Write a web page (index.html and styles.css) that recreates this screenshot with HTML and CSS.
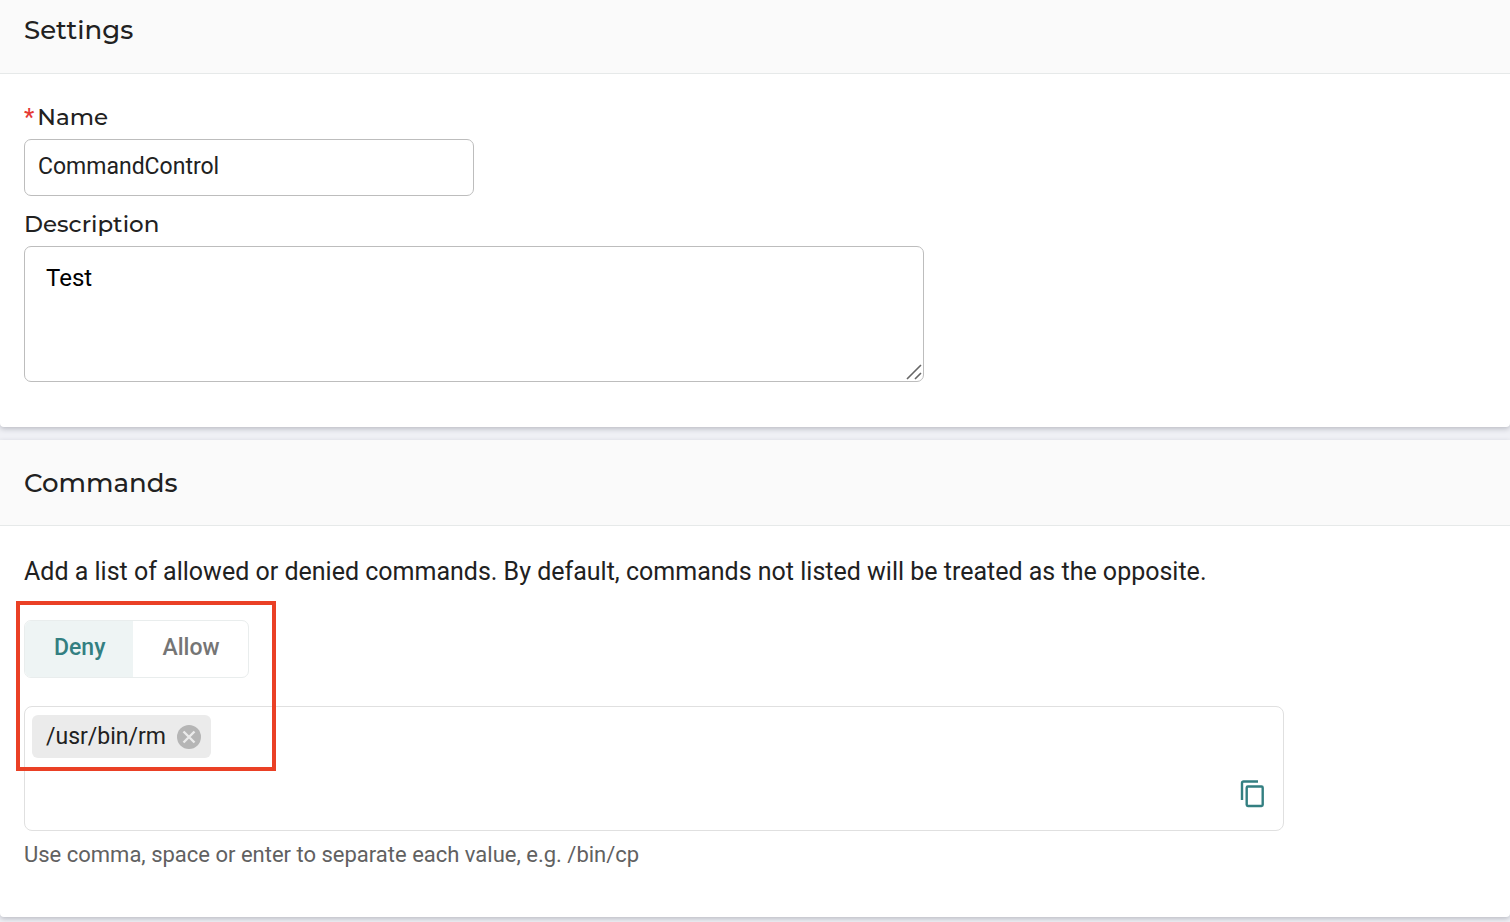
FILE: index.html
```html
<!DOCTYPE html>
<html lang="en">
<head>
    <meta charset="UTF-8">
    <meta name="viewport" content="width=device-width, initial-scale=1.0">
    <title>Command Control Settings</title>
    <link rel="stylesheet" href="styles.css">
</head>
<body>
    <main class="page">
        <section class="card">
            <header class="card-header card-header-first">
                <h2>Settings</h2>
            </header>
            <div class="card-body settings-body">
                <div class="field field-name">
                    <label for="name"><span class="required">*</span>Name</label>
                    <input type="text" id="name" value="CommandControl" required>
                </div>
                <div class="field field-description">
                    <label for="description">Description</label>
                    <div class="textarea-wrap">
                        <textarea id="description">Test</textarea>
                        <svg class="resize-grip" viewBox="0 0 16 16" aria-hidden="true">
                            <path d="M1 15L15 1M9 15l6-6" fill="none" stroke="#666" stroke-width="1.6"/>
                        </svg>
                    </div>
                </div>
            </div>
        </section>

        <section class="card">
            <header class="card-header">
                <h2>Commands</h2>
            </header>
            <div class="card-body commands-body">
                <p class="intro">Add a list of allowed or denied commands. By default, commands not listed will be treated as the opposite.</p>
                <div class="command-editor">
                    <div class="toggle" role="group" aria-label="Command mode">
                        <button type="button" class="toggle-btn active" aria-pressed="true">Deny</button>
                        <button type="button" class="toggle-btn" aria-pressed="false">Allow</button>
                    </div>
                    <div class="tag-box">
                        <span class="tag">
                            /usr/bin/rm
                            <button type="button" class="tag-remove" aria-label="Remove">
                                <svg viewBox="0 0 24 24">
                                    <circle cx="12" cy="12" r="12" fill="#b5b5b5"/>
                                    <path d="M6.500 6.500l11 11M17.500 6.500l-11 11" stroke="#ebebeb" stroke-width="2.4"/>
                                </svg>
                            </button>
                        </span>
                        <button type="button" class="copy-btn" aria-label="Copy">
                            <svg viewBox="0 0 24 28">
                                <path d="M1.5 20V3a1.5 1.5 0 0 1 1.500-1.500H17.500" fill="none" stroke="#337f81" stroke-width="2.400"/>
                                <rect x="6.200" y="6.500" width="16" height="19.500" rx="1.200" fill="none" stroke="#337f81" stroke-width="2.400"/>
                            </svg>
                        </button>
                    </div>
                    <div class="highlight"></div>
                </div>
                <p class="hint">Use comma, space or enter to separate each value, e.g. /bin/cp</p>
            </div>
        </section>
    </main>
</body>
</html>
```

FILE: styles.css
```css
* {
    box-sizing: border-box;
}

body {
    margin: 0;
    background-color: #eff0f5;
    color: #212121;
    font-family: Roboto, "Liberation Sans", sans-serif;
    font-size: 23px;
}

h2, p {
    margin: 0;
}

button {
    padding: 0;
    border: none;
    background: none;
    font-family: inherit;
    cursor: pointer;
}

.page {
    display: flex;
    flex-direction: column;
    gap: 13px;
    padding-bottom: 5px;
}

.card {
    background-color: #fff;
    border-radius: 0 0 4px 4px;
    box-shadow: 0 2px 5px rgba(40, 45, 60, 0.25);
}

.card-header {
    padding: 27px 24px 26px;
    border-bottom: 1px solid #e6e9e9;
    background-color: #fafafa;
}

.card-header-first {
    padding-top: 14px;
    padding-bottom: 27px;
}

.card-header h2 {
    font-family: Montserrat, Inter, sans-serif;
    font-size: 26px;
    font-weight: 500;
    line-height: 32px;
}

.settings-body {
    display: flex;
    flex-direction: column;
    gap: 14px;
    padding: 29px 24px 45px;
}

.field {
    display: flex;
    flex-direction: column;
    gap: 8px;
}

.field label {
    font-family: Montserrat, Inter, sans-serif;
    font-size: 23px;
    font-weight: 500;
    line-height: 28px;
}

.field-name {
    max-width: 450px;
}

.field-description {
    max-width: 900px;
}

.required {
    margin-right: 3px;
    color: #e53935;
    font-family: Roboto, sans-serif;
    font-size: 23px;
    line-height: 1;
}

.field input,
.field textarea {
    display: block;
    width: 100%;
    border: 1px solid #bdbdbd;
    border-radius: 7px;
    background-color: #fff;
    color: #212121;
    font-family: inherit;
    font-size: 23px;
    line-height: 28px;
}

.field input {
    padding: 13px 13px 14px;
}

.textarea-wrap {
    position: relative;
}

.field textarea {
    height: 136px;
    padding: 17px 21px;
    color: #000;
    font-size: 24px;
    resize: vertical;
}

.field textarea::-webkit-resizer {
    display: none;
}

.resize-grip {
    position: absolute;
    right: 2px;
    bottom: 2px;
    width: 16px;
    height: 16px;
    pointer-events: none;
}

.commands-body {
    padding: 30px 24px 48px;
}

.intro {
    font-size: 25px;
    line-height: 32px;
}

.command-editor {
    position: relative;
    max-width: 1260px;
    margin-top: 32px;
}

.toggle {
    display: inline-flex;
    overflow: hidden;
    border: 1px solid #e9eded;
    border-radius: 7px;
    vertical-align: top;
}

.toggle-btn {
    padding: 13px 28px 15px 29px;
    color: #757575;
    font-size: 23px;
    font-weight: 500;
    line-height: 28px;
}

.toggle-btn.active {
    background-color: #eef4f4;
    color: #337f81;
}

.tag-box {
    display: flex;
    align-items: flex-start;
    justify-content: space-between;
    min-height: 125px;
    margin-top: 28px;
    padding: 8px 18px 22px 7px;
    border: 1px solid #e0e0e0;
    border-radius: 8px;
}

.tag {
    display: flex;
    align-items: center;
    gap: 11px;
    padding: 8px 10px 7px 14px;
    border-radius: 6px;
    background-color: #ebebeb;
    line-height: 28px;
}

.tag-remove,
.copy-btn {
    display: flex;
}

.tag-remove svg {
    width: 24px;
    height: 24px;
}

.copy-btn {
    align-self: flex-end;
}

.copy-btn svg {
    width: 25px;
    height: 28px;
}

/* red frame around the mode toggle and the first tag */
.highlight {
    position: absolute;
    top: -19px;
    left: -8px;
    width: 260px;
    height: 170px;
    border: 4px solid #ea4025;
    pointer-events: none;
}

.hint {
    margin-top: 10px;
    color: #616161;
    font-size: 22px;
    line-height: 28px;
}
```
